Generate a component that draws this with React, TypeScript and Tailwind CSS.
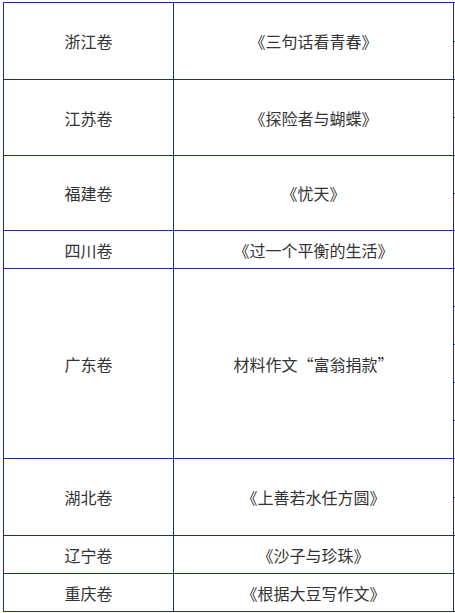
import React from "react";

const rows: { a: string; b: string; h: string; sub: number }[] = [
  { a: "浙江卷", b: "《三句话看青春》", h: "h-[77px]", sub: 2 },
  { a: "江苏卷", b: "《探险者与蝴蝶》", h: "h-[76px]", sub: 2 },
  { a: "福建卷", b: "《忧天》", h: "h-[75px]", sub: 2 },
  { a: "四川卷", b: "《过一个平衡的生活》", h: "h-[38px]", sub: 1 },
  { a: "广东卷", b: "材料作文“富翁捐款”", h: "h-[190px]", sub: 5 },
  { a: "湖北卷", b: "《上善若水任方圆》", h: "h-[77px]", sub: 2 },
  { a: "辽宁卷", b: "《沙子与珍珠》", h: "h-[38px]", sub: 1 },
  { a: "重庆卷", b: "《根据大豆写作文》", h: "h-[38px]", sub: 1 },
];

export default function App() {
  return (
    <div className="w-[455px] h-[613px] overflow-hidden bg-white pl-[3px] pt-[2px]">
      <div
        className="w-[560px] border-t border-l border-[#1a2d8c] text-[16px] text-[#333333]"
        style={{ fontFamily: '"Noto Sans CJK SC", "Noto Sans", sans-serif' }}
      >
        {rows.map((r, i) => (
          <div key={i} className={`flex ${r.h}`}>
            <div className="w-[170px] shrink-0 flex items-center justify-center border-r border-b border-[#1a2d8c]">
              {r.a}
            </div>
            <div className="w-[280px] shrink-0 flex items-center justify-center border-r border-b border-[#1a2d8c]">
              {r.b}
            </div>
            <div className="flex-1 flex flex-col">
              {Array.from({ length: r.sub }).map((_, j) => (
                <div key={j} className="flex-1 border-b border-r border-[#1a2d8c]" />
              ))}
            </div>
          </div>
        ))}
      </div>
    </div>
  );
}
